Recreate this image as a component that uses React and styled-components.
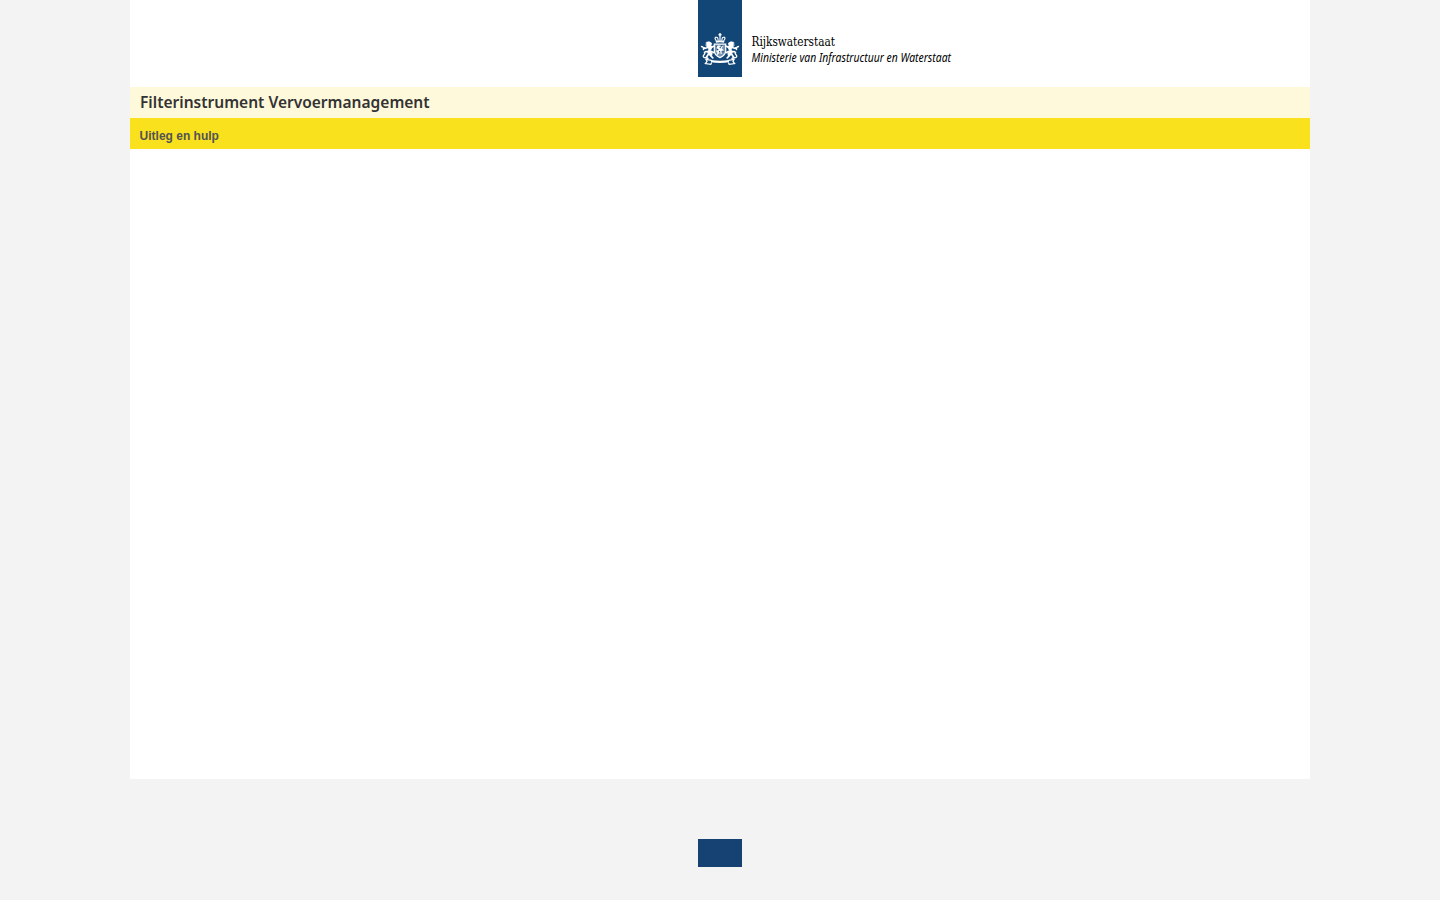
import React from "react";
import styled, { createGlobalStyle } from "styled-components";

const GlobalStyle = createGlobalStyle`
  body { margin: 0; background: #f3f3f3; font-family: Arial, "Liberation Sans", sans-serif; }
`;

const Page = styled.div`
  width: 1180px;
  margin: 0 auto;
`;

const Sheet = styled.main`
  height: 779px;
  background: #fff;
`;

const Header = styled.header`
  height: 87px;
  padding-left: 568px;
`;

const Logo = styled.svg`
  display: block;
  overflow: visible;
`;

const Wordmark = styled.text`
  font-family: ${(p) => (p.$italic ? '"Noto Sans", sans-serif' : '"DejaVu Serif Condensed", "DejaVu Serif", serif')};
  font-style: ${(p) => (p.$italic ? "italic" : "normal")};
  font-size: 12px;
  fill: #000;
`;

const TitleBar = styled.div`
  height: 31px;
  padding-left: 10px;
  background: #fff9db;
`;

const Title = styled.h1`
  display: inline-block;
  margin: 0;
  font: 600 16.5px/30px "Noto Sans", sans-serif;
  color: #333;
  white-space: nowrap;
  transform: scaleX(${(p) => p.$stretch});
  transform-origin: left;
`;

const Nav = styled.nav`
  height: 31px;
  box-sizing: border-box;
  padding: 11px 0 0 9.6px;
  background: #f9e11e;
`;

const NavLink = styled.a`
  display: block;
  font: bold 12px/14px Arial, "Liberation Sans", sans-serif;
  color: #535353;
`;

const FooterMark = styled.div`
  width: 44px;
  height: 28px;
  margin: 60px auto 0;
  background: #154273;
`;

const Lion = () => (
  <g fill="none" stroke="#fff" strokeLinecap="round" strokeLinejoin="round">
    <path d="M8.6 42.2q2.8-1.4 5 1l-.6 2.2 1 2.2-1.4 2.6 1.6 3.2-.8 3.2-3-2.2-.8-2.6 1.4-2.8-2.6-3z" fill="#fff" strokeWidth="0.8" />
    <path d="M13 47.4l2.8-1.2M13.4 51.5l2.4 1M13 56l1.8 1.8M10.2 54.5l-2 3 1.6 1" strokeWidth="1.7" />
    <path d="M10 47.6l-2.6.6-2-.8-1.8-.9M5.4 47.6l.2 2M10.4 51.8l-2.8-.3-1.2 1" strokeWidth="1.5" />
    <path d="M8.4 57.6c-2.4.4-3.6-.6-3-2 .5-1.2 2-1.4 1.4-2.8" strokeWidth="1.3" />
  </g>
);

const Emblem = () => (
  <g>
    <g fill="none" stroke="#fff">
      <path d="M22 33v4M20.5 34.7h3" strokeWidth="1.4" />
      <path d="M18.5 41c-3-3.2-.7-4.7 1.1-3.3.5.5.5 2 .5 3.3M25.5 41c3-3.2.7-4.7-1.1-3.3-.5.5-.5 2-.5 3.3M22 37v4" strokeWidth="1.1" />
      <path d="M17.8 41.9q4.2-1 8.4 0" strokeWidth="1.6" />
    </g>
    <path d="M16.3 44.2h11.4v6.6q0 4.4-5.7 6.8-5.7-2.4-5.7-6.8z" fill="#7894b0" stroke="#fff" strokeWidth="1.2" />
    <path d="M18.4 46.5l2.6-1.2 1.5 1.5 3-.9-1.9 2.4 2.3 2-2.7.7.8 2.9-2.5-.9-2.5 2.2.3-3.1-1.9-1.1 2.6-1.1z" fill="#fff" />
    <path d="M18.6 45.8v1M24.2 45.2l-1 1M19 49.2l1.3.8M24.5 51.5l1 .8M21.2 51.2l1 1.3M21.8 48l.8-.8" stroke="#124677" strokeWidth="1.1" />
    <Lion />
    <g transform="translate(44 0) scale(-1 1)">
      <Lion />
    </g>
    <path d="M13 60q9 1.4 18 0v2.2q-9 1.4-18 0z" fill="#fff" />
    <path d="M13.4 60.4l-5.4-1 1 2-1.6 2.2 5.4.8.8-2M30.6 60.4l5.4-1-1 2 1.6 2.2-5.4.8-.8-2" fill="none" stroke="#fff" strokeWidth="1.3" />
  </g>
);

export default function App() {
  return (
    <>
      <GlobalStyle />
      <Page>
        <Sheet>
          <Header>
            <Logo width="340" height="77" viewBox="0 0 340 77">
              <rect width="44" height="77" fill="#124677" />
              <Emblem />
              <Wordmark x="53.5" y="46" textLength="83.5" lengthAdjust="spacingAndGlyphs">
                Rijkswaterstaat
              </Wordmark>
              <Wordmark $italic x="53.5" y="62" textLength="199.5" lengthAdjust="spacingAndGlyphs">
                Ministerie van Infrastructuur en Waterstaat
              </Wordmark>
            </Logo>
          </Header>
          <TitleBar>
            <Title $stretch={0.941}>Filterinstrument Vervoermanagement</Title>
          </TitleBar>
          <Nav>
            <NavLink>Uitleg en hulp</NavLink>
          </Nav>
        </Sheet>
        <FooterMark />
      </Page>
    </>
  );
}
